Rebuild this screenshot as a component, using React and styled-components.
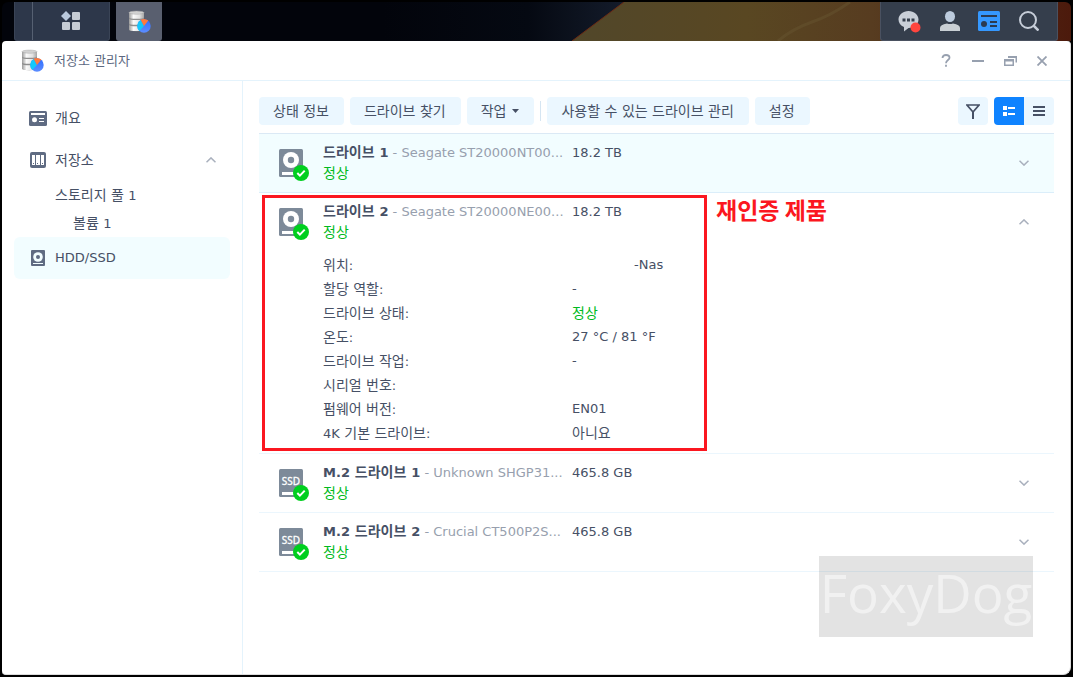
import React from 'react'
import styled, { createGlobalStyle } from 'styled-components'

const GlobalStyle = createGlobalStyle`
    * {
        box-sizing: border-box;
    }

    body {
        margin: 0;
        background: #000;
        color: #465065;
        font-family: 'DejaVu Sans', 'Noto Sans CJK KR', sans-serif;
        font-size: 13px;
    }

    button {
        font: inherit;
        color: inherit;
        border: 0;
        padding: 0;
        background: none;
        cursor: pointer;
    }

    a {
        color: inherit;
        text-decoration: none;
    }

    svg {
        display: block;
        flex: none;
    }
`

const Hangul = styled.span`
    font-size: 14px;
`

// Hangul is set one size up so that it sits evenly next to latin text
const Label = ({ children }) =>
    children
        .split(/([가-힣\s]+)/)
        .filter(Boolean)
        .map((part, i) =>
            /[가-힣]/.test(part) ? <Hangul key={i}>{part}</Hangul> : part
        )

const Desktop = styled.div`
    position: relative;
    display: flex;
    flex-direction: column;
    min-height: 100vh;
    padding: 2px;
    background: #000;
`

const Taskbar = styled.header`
    position: relative;
    display: flex;
    height: 39px;
    padding: 0 13px 0 12px;
    border-radius: 6px 6px 0 0;
    overflow: hidden;
    background: #02040b;
`

const Wallpaper = styled.svg`
    position: absolute;
    inset: 0;
    width: 100%;
    height: 100%;
`

const TaskGroup = styled.div`
    position: relative;
    display: flex;
    width: 96px;
    margin-right: 6px;
    padding-left: 17px;
    background: #2d374a;
    border: 1px solid #3a4456;
    border-top: 0;
    border-radius: 0 0 3px 3px;
`

const TaskButton = styled.button`
    position: relative;
    display: flex;
    flex: ${(p) => (p.$grow ? 1 : 'none')};
    width: 46px;
    align-items: center;
    justify-content: center;
    background: ${(p) => (p.$active ? '#595f6f' : 'none')};
    border-left: ${(p) => (p.$grow ? '1px solid #566072' : 0)};
    border-radius: ${(p) => (p.$active ? '0 0 3px 3px' : 0)};
`

const Tray = styled.div`
    position: relative;
    display: flex;
    width: 178px;
    margin-left: auto;
    padding: 0 8px 0 9px;
    background: #353e4c;
    border: 1px solid #4a5160;
    border-top: 0;
    border-radius: 0 0 3px 3px;
`

const TrayButton = styled.button`
    display: flex;
    flex: 1;
    align-items: center;
    justify-content: center;
`

const Window = styled.div`
    display: flex;
    flex: 1;
    flex-direction: column;
    background: #fff;
    border: solid #dcdcdc;
    border-width: 0 1px 1px 0;
    border-radius: 4px 4px 8px 4px;
`

const TitleBar = styled.div`
    display: flex;
    align-items: center;
    height: 40px;
    padding: 0 12px 0 18px;
    border-bottom: 1px solid #e4f3fc;
`

const Title = styled.h1`
    flex: 1;
    margin: 0 0 0 10px;
    font-size: 13px;
    font-weight: 400;
    line-height: 20px;
    color: #5c687f;
`

const WindowButton = styled.button`
    display: flex;
    width: 32px;
    height: 32px;
    align-items: center;
    justify-content: center;
`

const Body = styled.div`
    display: flex;
    flex: 1;
`

const Sidebar = styled.nav`
    width: 241px;
    flex: none;
    padding: 16px 12px;
    border-right: 1px solid #e4f3fc;
`

const NavItem = styled.a`
    display: flex;
    align-items: center;
    height: ${(p) => (p.$depth ? 28 : 42)}px;
    padding: 0 14px;
    padding-left: ${(p) => [14, 41, 59][p.$depth || 0]}px;
    gap: 7px;
    border-radius: 6px;
    background: ${(p) => (p.$active ? '#f2fdff' : 'none')};
`

const NavIcon = styled.span`
    display: flex;
    width: 20px;
    justify-content: center;
`

const NavText = styled.span`
    flex: 1;
    white-space: nowrap;
    line-height: 20px;
`

const Main = styled.main`
    flex: 1;
    min-width: 0;
    padding: 16px;
`

const Toolbar = styled.div`
    display: flex;
    gap: 6px;
    margin-bottom: 8px;
`

const ToolButton = styled.button`
    display: flex;
    align-items: center;
    gap: 6px;
    height: 28px;
    padding: 0 15px 0 14px;
    line-height: 20px;
    white-space: nowrap;
    border-radius: 4px;
    background: #ebf7ff;
`

const ToolDivider = styled.span`
    width: 1px;
    height: 20px;
    margin: 4px 0;
    background: #d5e5f2;
`

const ToolSide = styled.div`
    display: flex;
    gap: 6px;
    margin-left: auto;
`

const Segments = styled.div`
    display: flex;
    overflow: hidden;
    border-radius: 4px;
`

const IconButton = styled.button`
    display: flex;
    align-items: center;
    justify-content: center;
    width: 30px;
    height: 28px;
    border-radius: ${(p) => (p.$single ? 4 : 0)}px;
    color: ${(p) => (p.$active ? '#fff' : '#465065')};
    background: ${(p) => (p.$active ? '#0f83ff' : '#ebf7ff')};
`

const DriveList = styled.ul`
    margin: 0;
    padding: 0;
    list-style: none;
    border-top: 1px solid #dbe9f5;
`

const DriveItem = styled.li`
    position: relative;
    border-bottom: 1px solid ${(p) => (p.$selected ? '#dbeefa' : '#ebf6fd')};
    background: ${(p) => (p.$selected ? '#f2fdff' : 'none')};
`

const DriveHead = styled.div`
    display: grid;
    grid-template-columns: 44px 241px 1fr 20px;
    align-items: center;
    padding: 8px 20px;
`

const DriveIcon = styled.div`
    padding-top: 4px;
`

const DriveCol = styled.div`
    margin-left: ${(p) => (p.$gap ? 8 : 0)}px;
    align-self: start;
    line-height: 21px;
    white-space: nowrap;
`

const DriveLine = styled.div`
    height: 21px;
`

const Model = styled.span`
    color: #979fae;
`

const Healthy = styled.span`
    color: #00ba20;
`

const ExpandButton = styled.button`
    display: flex;
    width: 20px;
    height: 20px;
    align-items: center;
    justify-content: center;
`

const Details = styled.dl`
    display: grid;
    grid-template-columns: 249px 1fr;
    margin: 0;
    padding: 2px 20px 8px 64px;
    line-height: 24px;
`

const DetailName = styled.dt`
    height: 24px;
`

const DetailValue = styled.dd`
    height: 24px;
    margin: 0;
    padding-left: ${(p) => (p.$masked ? 62 : 0)}px;
    color: ${(p) => (p.$healthy ? '#00ba20' : 'inherit')};
`

const Highlight = styled.div`
    position: absolute;
    top: 2px;
    bottom: 2px;
    left: 3px;
    width: 445px;
    border: 3px solid #fb1720;
    pointer-events: none;
`

const HighlightNote = styled.strong`
    position: absolute;
    top: 2px;
    left: 457px;
    font-family: 'Noto Sans CJK KR', sans-serif;
    font-size: 23px;
    line-height: 28px;
    color: #fb1720;
    white-space: nowrap;
`

const Watermark = styled.div`
    position: absolute;
    right: 40px;
    bottom: 40px;
    width: 214px;
    height: 81px;
    background: rgba(0, 0, 0, 0.11);
    color: rgba(255, 255, 255, 0.5);
    font-family: 'Open Sans', 'Noto Sans', sans-serif;
    font-size: 53px;
    line-height: 74px;
    text-align: center;
    pointer-events: none;
`

const StorageLogo = ({ id }) => (
    <svg width="24" height="24" viewBox="0 0 24 24">
        <defs>
            <linearGradient id={`${id}-disk`}>
                <stop offset="0" stopColor="#9a9a9a" />
                <stop offset=".3" stopColor="#fafafa" />
                <stop offset=".7" stopColor="#e2e2e2" />
                <stop offset="1" stopColor="#a5a5a5" />
            </linearGradient>
            <linearGradient id={`${id}-pie`} x2="0" y2="1">
                <stop offset="0" stopColor="#2f6dff" />
                <stop offset="1" stopColor="#5c8dff" />
            </linearGradient>
        </defs>
        <path d="M2 3v17q7 2.500 15 0V3z" fill="#8f8f8f" />
        {[2.5, 8.5, 14.8].map((y) => (
            <path
                key={y}
                d={`M2 ${y}q0 1.500 7.500 1.500t7.500-1.500v4.800q0 1.500-7.500 1.500t-7.500-1.500z`}
                fill={`url(#${id}-disk)`}
            />
        ))}
        <ellipse cx="9.500" cy="2.700" rx="7.500" ry="1.600" fill="#d2d2d2" stroke="#aaa" strokeWidth=".5" />
        <circle cx="17" cy="16" r="6.700" fill={`url(#${id}-pie)`} />
        <path d="M17 16l-4.600 4.900A6.700 6.700 0 0 1 13.800 10.100z" fill="#13c8fa" />
        <path d="M17 16L13.600 9.800A7 7 0 0 1 21.300 10.600z" fill="#ff7a3c" />
    </svg>
)

const OverviewIcon = () => (
    <svg width="18" height="15" viewBox="0 0 18 15">
        <rect width="18" height="15" rx="1.500" fill="#5f6b82" />
        <path d="M2 2h14v2H2zM10 7h5v1H10zM10 10h5v1h-5z" fill="#fff" />
        <circle cx="5.500" cy="8.800" r="2.500" fill="#fff" />
    </svg>
)

const PoolIcon = () => (
    <svg width="16" height="16" viewBox="0 0 16 16">
        <rect width="16" height="16" rx="2" fill="#5f6b82" />
        <path d="M2 3h3v10H2zM6 3h4v10H6zM11 3h3v10h-3z" fill="#fff" />
        <path d="M3 11h1v1H3zM7 11h1v1H7zM12 11h1v1h-1z" fill="#5f6b82" />
    </svg>
)

const DiskIcon = () => (
    <svg width="14" height="16" viewBox="0 0 14 16">
        <rect width="14" height="16" rx="1" fill="#5f6b82" />
        <circle cx="7" cy="7" r="4.800" fill="#f2fdff" />
        <circle cx="7" cy="7" r="2" fill="#5f6b82" />
        <path d="M2 13h10v1H2z" fill="#f2fdff" />
    </svg>
)

const Chevron = ({ up }) => (
    <svg width="10" height="6" viewBox="0 0 10 6" fill="none" stroke="#a9b0bd" strokeWidth="1.500">
        <path d={up ? 'M.5 5.300L5 .9l4.500 4.400' : 'M.5.7L5 5.100 9.500.7'} />
    </svg>
)

const DriveGlyph = ({ ssd }) => (
    <svg width="30" height="32" viewBox="0 0 30 32">
        <rect width="24" height="28" rx="1.500" fill="#7d8a99" />
        {ssd ? (
            <text
                x="12"
                y="16"
                fill="#fff"
                stroke="#fff"
                strokeWidth=".3"
                fontSize="10"
                textAnchor="middle"
                fontFamily="'Noto Sans', sans-serif">
                SSD
            </text>
        ) : (
            <>
                <circle cx="12" cy="11" r="8" fill="#fff" />
                <circle cx="12" cy="11" r="3.200" fill="#7d8a99" />
            </>
        )}
        <path d="M3 23h12v3H3z" fill="#fff" />
        <circle cx="22" cy="24" r="8" fill="#00cf1f" />
        <path d="M18.300 24l2.600 2.600 4.800-5" fill="none" stroke="#fff" strokeWidth="2" />
    </svg>
)

const drives = [
    {
        name: '드라이브 1',
        model: 'Seagate ST20000NT00...',
        size: '18.2 TB',
        selected: true,
    },
    {
        name: '드라이브 2',
        model: 'Seagate ST20000NE00...',
        size: '18.2 TB',
        note: '재인증 제품',
        details: [
            { name: '위치:', value: '-Nas', masked: true },
            { name: '할당 역할:', value: '-' },
            { name: '드라이브 상태:', value: '정상', healthy: true },
            { name: '온도:', value: '27 °C / 81 °F' },
            { name: '드라이브 작업:', value: '-' },
            { name: '시리얼 번호:', value: '' },
            { name: '펌웨어 버전:', value: 'EN01' },
            { name: '4K 기본 드라이브:', value: '아니요' },
        ],
    },
    {
        name: 'M.2 드라이브 1',
        model: 'Unknown SHGP31...',
        size: '465.8 GB',
        ssd: true,
    },
    {
        name: 'M.2 드라이브 2',
        model: 'Crucial CT500P2S...',
        size: '465.8 GB',
        ssd: true,
    },
]

const Drive = ({ drive }) => (
    <DriveItem $selected={drive.selected}>
        <DriveHead>
            <DriveIcon>
                <DriveGlyph ssd={drive.ssd} />
            </DriveIcon>
            <DriveCol>
                <DriveLine>
                    <b>
                        <Label>{drive.name}</Label>
                    </b>
                    <Model> - {drive.model}</Model>
                </DriveLine>
                <DriveLine>
                    <Healthy>
                        <Label>정상</Label>
                    </Healthy>
                </DriveLine>
            </DriveCol>
            <DriveCol $gap>{drive.size}</DriveCol>
            <ExpandButton aria-label={drive.name} aria-expanded={!!drive.details}>
                <Chevron up={!!drive.details} />
            </ExpandButton>
        </DriveHead>
        {drive.details && (
            <Details>
                {drive.details.map((row) => (
                    <React.Fragment key={row.name}>
                        <DetailName>
                            <Label>{row.name}</Label>
                        </DetailName>
                        <DetailValue
                            $healthy={row.healthy}
                            $masked={row.masked}>
                            <Label>{row.value}</Label>
                        </DetailValue>
                    </React.Fragment>
                ))}
            </Details>
        )}
        {drive.note && (
            <>
                <Highlight />
                <HighlightNote>{drive.note}</HighlightNote>
            </>
        )}
    </DriveItem>
)

const App = () => {
    return (
        <>
            <GlobalStyle />
            <Desktop>
                <Taskbar>
                    <Wallpaper viewBox="0 0 1069 39" preserveAspectRatio="none">
                        <defs>
                            <linearGradient id="planet">
                                <stop offset="0" stopColor="#51472a" />
                                <stop offset=".35" stopColor="#594722" />
                                <stop offset=".6" stopColor="#573c20" />
                                <stop offset="1" stopColor="#4c1a0c" />
                            </linearGradient>
                            <linearGradient id="space">
                                <stop offset="0" stopColor="#02040b" />
                                <stop offset=".6" stopColor="#050912" />
                                <stop offset="1" stopColor="#141c2b" />
                            </linearGradient>
                        </defs>
                        <path d="M380 0h244l-52 39H380z" fill="url(#space)" />
                        <path d="M622 0h447v39H570z" fill="url(#planet)" />
                        <path d="M622 0l-52 39" stroke="#6b2a14" />
                        <path
                            d="M776 39q14-12 34-19t38-20"
                            stroke="#66542f"
                            strokeWidth="3"
                            strokeOpacity=".5"
                            fill="none"
                        />
                    </Wallpaper>
                    <TaskGroup>
                        <TaskButton $grow aria-label="메인 메뉴">
                            <svg width="20" height="20" viewBox="0 0 20 20" fill="#c5cbd4">
                                <path d="M5 0l5 5-5 5-5-5z" fill="#b9c8dc" />
                                <rect x="11" y="1" width="8" height="8" rx="1" />
                                <rect x="1" y="11" width="8" height="8" rx="1" />
                                <rect x="11" y="11" width="8" height="8" rx="1" />
                            </svg>
                        </TaskButton>
                    </TaskGroup>
                    <TaskButton $active aria-label="저장소 관리자">
                        <StorageLogo id="task" />
                    </TaskButton>
                    <Tray>
                        <TrayButton aria-label="알림">
                            <svg width="23" height="23" viewBox="0 0 23 23">
                                <path
                                    d="M10.500 1c5.500 0 10 3.700 10 8.500S16 18 10.500 18l-4.500 3.500V17C2.500 15.500.5 12.800.5 9.500.5 4.700 5 1 10.500 1z"
                                    fill="#c9cfd8"
                                />
                                <path d="M4.500 8.500h3v3h-3zM9 8.500h3v3H9zM13.500 8.500h3v3h-3z" fill="#353e4c" />
                                <circle cx="17.500" cy="17.500" r="5" fill="#ff453e" />
                            </svg>
                        </TrayButton>
                        <TrayButton aria-label="사용자">
                            <svg width="20" height="20" viewBox="0 0 20 20" fill="#c9cfd4">
                                <ellipse cx="10" cy="5.500" rx="5" ry="5.500" fill="#bccbdd" />
                                <path d="M0 20v-3q0-3.500 7-4.500 3 1.200 6 0 7 1 7 4.500v3z" />
                            </svg>
                        </TrayButton>
                        <TrayButton aria-label="위젯">
                            <svg width="22" height="20" viewBox="0 0 22 20">
                                <rect width="22" height="20" rx="1.500" fill="#3598ff" />
                                <path d="M3 4h16v2H3zM12 10h7v2h-7zM12 14h7v2h-7z" fill="#2b3a50" />
                                <circle cx="6" cy="13" r="3" fill="#2b3a50" />
                            </svg>
                        </TrayButton>
                        <TrayButton aria-label="검색">
                            <svg width="20" height="20" viewBox="0 0 20 20" fill="none" stroke="#c6cdd8">
                                <circle cx="9" cy="9" r="8" strokeWidth="2" />
                                <path d="M14.500 14.500l5 5" strokeWidth="2.500" />
                            </svg>
                        </TrayButton>
                    </Tray>
                </Taskbar>
                <Window>
                    <TitleBar>
                        <StorageLogo id="title" />
                        <Title>저장소 관리자</Title>
                        <WindowButton aria-label="도움말">
                            <svg width="10" height="13" viewBox="0 0 10 13" fill="none" stroke="#97a0af" strokeWidth="1.800">
                                <path d="M1.500 4C1.500 2 3 1 5 1s3.500 1 3.500 2.800C8.500 6 5 6.200 5 9.300" />
                                <path d="M5 10.800v2" />
                            </svg>
                        </WindowButton>
                        <WindowButton aria-label="최소화">
                            <svg width="12" height="2" viewBox="0 0 12 2">
                                <path d="M0 0h12v2H0z" fill="#97a0af" />
                            </svg>
                        </WindowButton>
                        <WindowButton aria-label="복원">
                            <svg width="13" height="10" viewBox="0 0 13 10" fill="none" stroke="#97a0af" strokeWidth="1.500">
                                <path d="M.75 3.750v5.500h8.500v-5.500z" />
                                <path d="M0 4.500h10M4 1h9" strokeWidth="2" />
                                <path d="M12.250 1v5.500" />
                            </svg>
                        </WindowButton>
                        <WindowButton aria-label="닫기">
                            <svg width="10" height="10" viewBox="0 0 10 10" stroke="#97a0af" strokeWidth="1.800">
                                <path d="M.5.5l9 9M9.500.5l-9 9" />
                            </svg>
                        </WindowButton>
                    </TitleBar>
                    <Body>
                        <Sidebar>
                            <NavItem href="#overview">
                                <NavIcon>
                                    <OverviewIcon />
                                </NavIcon>
                                <NavText>
                                    <Label>개요</Label>
                                </NavText>
                            </NavItem>
                            <NavItem href="#storage">
                                <NavIcon>
                                    <PoolIcon />
                                </NavIcon>
                                <NavText>
                                    <Label>저장소</Label>
                                </NavText>
                                <Chevron up />
                            </NavItem>
                            <NavItem href="#pool-1" $depth={1}>
                                <NavText>
                                    <Label>스토리지 풀 1</Label>
                                </NavText>
                            </NavItem>
                            <NavItem href="#volume-1" $depth={2}>
                                <NavText>
                                    <Label>볼륨 1</Label>
                                </NavText>
                            </NavItem>
                            <NavItem href="#drives" $active>
                                <NavIcon>
                                    <DiskIcon />
                                </NavIcon>
                                <NavText>HDD/SSD</NavText>
                            </NavItem>
                        </Sidebar>
                        <Main>
                            <Toolbar>
                                <ToolButton>
                                    <span>
                                        <Label>상태 정보</Label>
                                    </span>
                                </ToolButton>
                                <ToolButton>
                                    <span>
                                        <Label>드라이브 찾기</Label>
                                    </span>
                                </ToolButton>
                                <ToolButton>
                                    <span>
                                        <Label>작업</Label>
                                    </span>
                                    <svg width="7" height="4" viewBox="0 0 7 4">
                                        <path d="M0 0h7L3.500 4z" fill="#465065" />
                                    </svg>
                                </ToolButton>
                                <ToolDivider />
                                <ToolButton>
                                    <span>
                                        <Label>사용할 수 있는 드라이브 관리</Label>
                                    </span>
                                </ToolButton>
                                <ToolButton>
                                    <span>
                                        <Label>설정</Label>
                                    </span>
                                </ToolButton>
                                <ToolSide>
                                    <IconButton $single aria-label="필터">
                                        <svg width="14" height="15" viewBox="0 0 14 15" fill="none" stroke="currentColor" strokeWidth="1.700">
                                            <path d="M1 1h12L7 8z" />
                                            <path d="M7 7v8" strokeWidth="2" />
                                        </svg>
                                    </IconButton>
                                    <Segments>
                                        <IconButton $active aria-label="자세히 보기">
                                            <svg width="12" height="10" viewBox="0 0 12 10" fill="currentColor">
                                                <path d="M0 0h4v4H0zM0 6h4v4H0zM5 1h7v2H5zM5 7h7v2H5z" />
                                            </svg>
                                        </IconButton>
                                        <IconButton aria-label="목록 보기">
                                            <svg width="12" height="10" viewBox="0 0 12 10" fill="currentColor">
                                                <path d="M0 0h12v2H0zM0 4h12v2H0zM0 8h12v2H0z" />
                                            </svg>
                                        </IconButton>
                                    </Segments>
                                </ToolSide>
                            </Toolbar>
                            <DriveList>
                                {drives.map((drive) => (
                                    <Drive key={drive.name} drive={drive} />
                                ))}
                            </DriveList>
                        </Main>
                    </Body>
                </Window>
                <Watermark>FoxyDog</Watermark>
            </Desktop>
        </>
    )
}

export default App
